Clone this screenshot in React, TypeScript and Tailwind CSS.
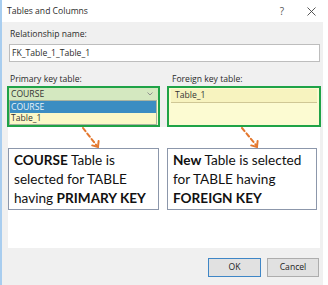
export default function App() {
  return (
    <div className="w-[328px] h-[285px] flex bg-white border-l-2 border-[#a8cdef] font-['Open_Sans',sans-serif] text-[8.6px] text-[#2a2a2a] overflow-hidden">
      <div className="flex flex-col w-[321px]">
        {/* Title bar */}
        <div className="h-[22px] shrink-0 flex items-center pl-[5px] pr-[7px] bg-white">
          <span className="flex-1">Tables and Columns</span>
          <span className="w-[10px] text-center text-[10px] text-[#555]">?</span>
          <svg className="ml-[20px]" width="9" height="9" viewBox="0 0 9 9">
            <path d="M0.5 0.5 L8.5 8.5 M8.5 0.5 L0.5 8.5" stroke="#444" strokeWidth="0.9" fill="none" />
          </svg>
        </div>

        {/* Body */}
        <div className="flex-1 flex flex-col bg-[#f0f0f0]">
          <div className="h-[12px] leading-[12px] mt-[6px] pl-[8px]">Relationship name:</div>
          <div className="h-[18px] mt-[4px] ml-[7px] mr-[3px] bg-white border border-[#bdbdbd] flex items-center pl-[2px]">
            FK_Table_1_Table_1
          </div>

          <div className="grid grid-cols-[153px_154px] gap-[7px] ml-[5px] mt-[11px] h-[12px] leading-[12px]">
            <span className="pl-[3px]">Primary key table:</span>
            <span className="pl-[5px]">Foreign key table:</span>
          </div>

          <div className="grid grid-cols-[153px_154px] gap-[7px] ml-[5px] mt-[1px] h-[41px]">
            {/* Primary key table */}
            <div className="border-2 border-[#1fa347] flex flex-col bg-[#fcfad0]">
              <div className="h-[12px] shrink-0 bg-[#d4e8c0] flex items-center pl-[2px] pr-[5px] text-[#333]">
                <span className="flex-1">COURSE</span>
                <svg width="6" height="4" viewBox="0 0 6 4">
                  <path d="M0.5 0.5 L3 3 L5.5 0.5" stroke="#888" strokeWidth="0.9" fill="none" />
                </svg>
              </div>
              <div className="flex flex-col border border-[#a9b4a0] mr-[1px]">
                <div className="h-[12px] bg-[#3b8dc2] text-[#e8f3fa] flex items-center pl-[1px]">COURSE</div>
                <div className="h-[11px] bg-[#fbf8c8] flex items-center pl-[1px] text-[#333]">Table_1</div>
              </div>
            </div>

            {/* Foreign key table */}
            <div className="border-2 border-[#1fa347] bg-[#fcfbd2] pt-[1px]">
              <div className="h-[14px] mx-[2px] bg-[#f7f3bf] border-b border-[#cfc795] flex items-center pl-[4px] text-[#333]">
                Table_1
              </div>
            </div>
          </div>

          {/* Annotation area */}
          <div className="h-[121px] ml-[6px] mr-[3px] bg-white flex flex-col">
            <svg width="312" height="21" viewBox="0 0 312 21">
              <g stroke="#e4782f" strokeWidth="2" fill="none" strokeLinecap="round">
                <path d="M75 1 L89 19" strokeDasharray="4 3" />
                <polyline points="84.2,18.4 90,20 90.6,14" />
                <path d="M234 1 L248 18" strokeDasharray="4 3" />
                <polyline points="243.2,18.4 249,20 249.6,14" />
              </g>
            </svg>
            <div className="grid grid-cols-[151px_150px] gap-[8px] font-['Lato',sans-serif] text-[13.6px] leading-[19px] text-[#111]">
              <div className="h-[62px] border border-[#8c97ab] pt-[2px] pl-[5px]">
                <b>COURSE</b> Table is
                <br />
                selected for TABLE
                <br />
                having <b>PRIMARY KEY</b>
              </div>
              <div className="h-[62px] border border-[#8c97ab] pt-[2px] pl-[5px]">
                <b>New</b> Table is selected
                <br />
                for TABLE having
                <br />
                <b>FOREIGN KEY</b>
              </div>
            </div>
          </div>

          {/* Footer */}
          <div className="flex-1 flex justify-end items-start gap-[6px] pt-[10px] pr-[4px]">
            <button className="w-[53px] h-[19px] bg-[#e1e1e1] border border-[#3f86c6] text-[8.6px] text-[#222]">OK</button>
            <button className="w-[52px] h-[19px] bg-[#e1e1e1] border border-[#adadad] text-[8.6px] text-[#222]">Cancel</button>
          </div>
        </div>
      </div>
      <div className="flex-1 bg-white" />
    </div>
  );
}
